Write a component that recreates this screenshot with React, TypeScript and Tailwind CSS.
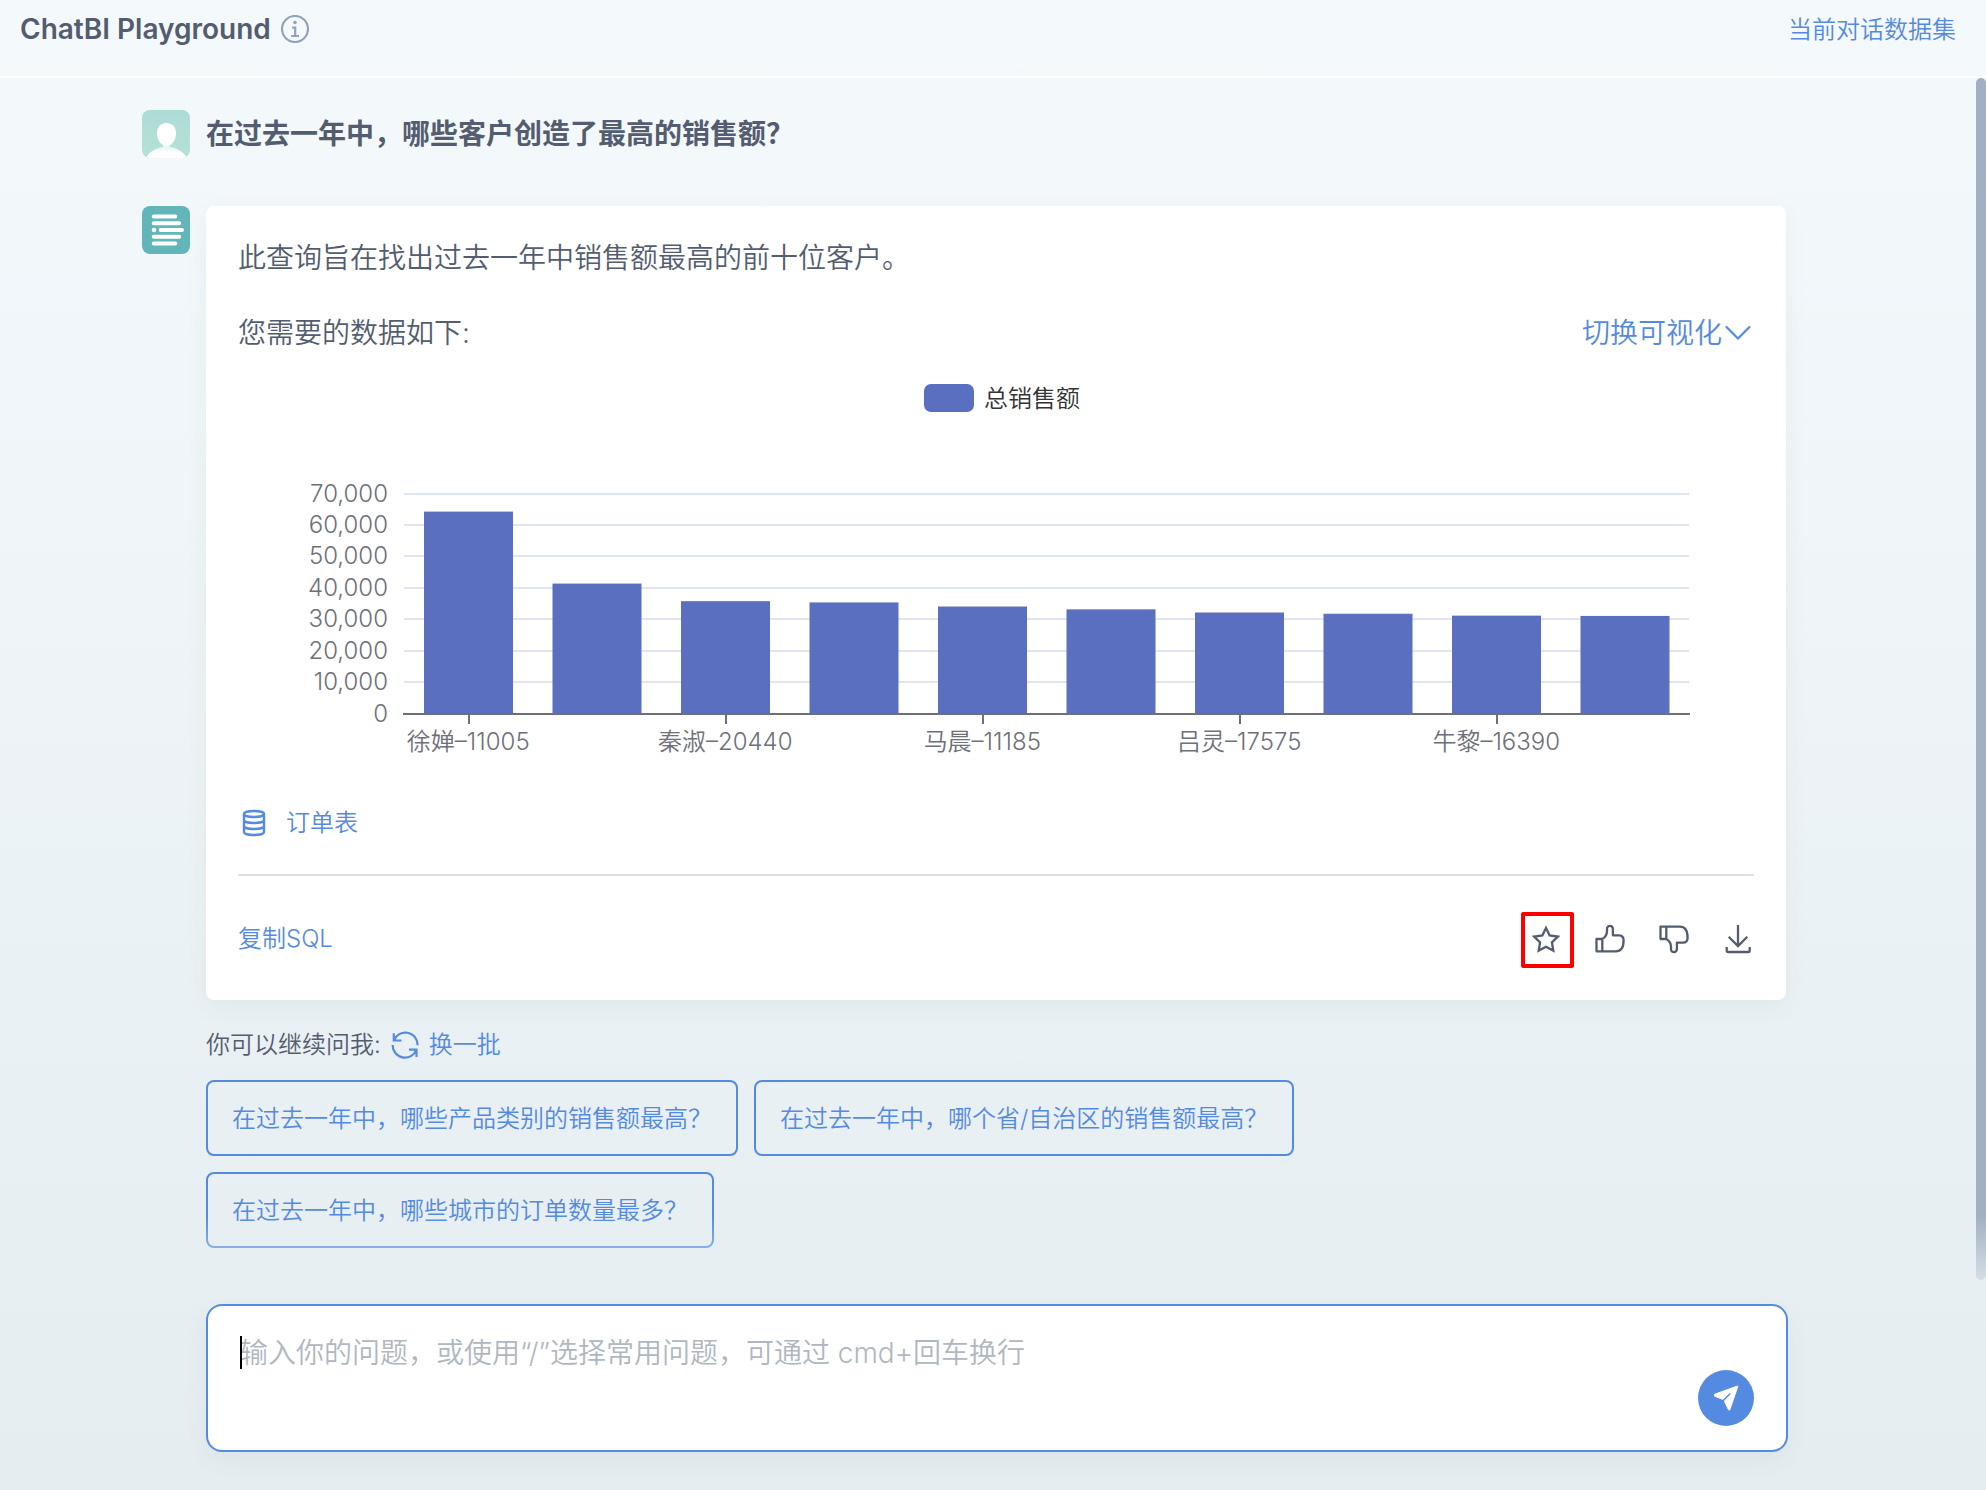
import React from "react";

const sales = [
  { name: "徐婵–11005", value: 64400 },
  { name: "", value: 41500 },
  { name: "秦淑–20440", value: 35900 },
  { name: "", value: 35500 },
  { name: "马晨–11185", value: 34200 },
  { name: "", value: 33300 },
  { name: "吕灵–17575", value: 32300 },
  { name: "", value: 31900 },
  { name: "牛黎–16390", value: 31300 },
  { name: "", value: 31200 },
];

const gridValues = [0, 10000, 20000, 30000, 40000, 50000, 60000, 70000];

const suggestions = [
  "在过去一年中，哪些产品类别的销售额最高？",
  "在过去一年中，哪个省/自治区的销售额最高？",
  "在过去一年中，哪些城市的订单数量最多？",
];

function InfoIcon() {
  return (
    <svg viewBox="0 0 28 28" className="size-7" fill="none" stroke="#8fa3ba" strokeWidth="2.200">
      <circle cx="14" cy="14" r="13" />
      <path d="M11.2 12.7H14.2V21M10.2 21H18" />
      <circle cx="14" cy="7.5" r="1.8" fill="#8fa3ba" stroke="none" />
    </svg>
  );
}

function UserAvatar() {
  return (
    <svg viewBox="0 0 48 48" className="size-12 rounded-lg">
      <defs>
        <linearGradient id="avatar-bg" x1="0" y1="0" x2="0" y2="1">
          <stop offset="0" stopColor="#addbd5" />
          <stop offset="1" stopColor="#b6e1da" />
        </linearGradient>
        <linearGradient id="avatar-body" x1="0" y1="0" x2="0" y2="1">
          <stop offset="0" stopColor="#d3edea" />
          <stop offset="0.7" stopColor="#ffffff" />
        </linearGradient>
      </defs>
      <rect width="48" height="48" fill="url(#avatar-bg)" />
      <path d="M4 48C8 41 14 38.5 21 37V32H28V37C35 38.5 41 41 45 48Z" fill="url(#avatar-body)" />
      <path d="M24.5 13C30 13 34 16.500 34 23C34 30 30 36 24.500 36C19 36 15 30 15 23C15 16.500 19 13 24.500 13Z" fill="#fff" />
    </svg>
  );
}

function BotAvatar() {
  return (
    <svg viewBox="0 0 48 48" className="size-12 rounded-lg bg-[#62b5b9]" stroke="#fff" strokeWidth="4" strokeLinecap="round">
      <path d="M11.700 10.500H33.300M11.700 17.200H37.200M18.700 24H40M11.700 30.800H37.200M11.700 37.600H33.300" />
      <circle cx="12" cy="24" r="2.300" fill="#fff" stroke="none" />
    </svg>
  );
}

function ChevronIcon() {
  return (
    <svg viewBox="0 0 28 28" className="h-7 w-8" fill="none" stroke="currentColor" strokeWidth="2.200" strokeLinecap="round" strokeLinejoin="round">
      <path d="M2.500 8L14 19.500L25.500 8" />
    </svg>
  );
}

function DatabaseIcon() {
  return (
    <svg viewBox="0 0 24 28" className="h-7 w-6" fill="none" stroke="currentColor" strokeWidth="2.400">
      <ellipse cx="12" cy="5" rx="10" ry="3" />
      <path d="M2 5V23A10 3 0 0 0 22 23V5M2 11A10 3 0 0 0 22 11M2 17A10 3 0 0 0 22 17" />
    </svg>
  );
}

function RefreshIcon() {
  return (
    <svg viewBox="0 0 28 28" className="size-7" fill="none" stroke="currentColor" strokeWidth="2.200">
      <path d="M2.800 2.300V9.500H10.500M2.800 9.500A12.300 12.300 0 0 1 26.600 14.200" />
      <path d="M25.500 26V18.700H18M25.500 18.700A12.300 12.300 0 0 1 1.700 14" />
    </svg>
  );
}

function StarIcon() {
  return (
    <svg viewBox="0 0 32 32" className="size-8" fill="none" stroke="currentColor" strokeWidth="2.300" strokeMiterlimit="8">
      <path d="M16 5L19.600 12.400L27.900 13.600L21.900 19.300L23.300 27.600L16 23.700L8.700 27.600L10.100 19.300L4.100 13.600L12.400 12.400Z" />
    </svg>
  );
}

function ThumbIcon({ down = false }: { down?: boolean }) {
  return (
    <svg viewBox="0 0 32 32" className={down ? "size-8 -scale-y-100" : "size-8"} fill="none" stroke="currentColor" strokeWidth="2.300" strokeLinejoin="round">
      <path d="M8.300 16V28.300H2.500V16H8.300C11 14.500 13 11 13 8V5.500C13 2 18.700 1.800 18.900 6V12.300H25C28 12.300 29.600 14 29.600 17.300C29.600 23.500 28 28.300 21.800 28.300H8.300" />
    </svg>
  );
}

function DownloadIcon() {
  return (
    <svg viewBox="0 0 32 32" className="size-8" fill="none" stroke="currentColor" strokeWidth="2.300">
      <path d="M16 2V23M6.700 13.700L16 23L25.300 13.700M4.700 24V27.500Q4.700 29 6.200 29H26.200Q27.700 29 27.700 27.500V24" />
    </svg>
  );
}

function SendIcon() {
  return (
    <svg viewBox="0 0 56 56" className="size-14">
      <path d="M39.500 16L16.500 24.300L16.300 26L25.800 29.800L30.500 39.800H31.800L39.800 16.500Z" fill="#fff" stroke="#fff" strokeWidth="1" strokeLinejoin="round" />
      <path d="M24.800 31L31.800 24" stroke="#548adf" strokeWidth="1.500" strokeLinecap="round" />
    </svg>
  );
}

function SalesChart() {
  const left = 166;
  const right = 1451;
  const base = 338;
  const height = 220;
  const step = (right - left) / sales.length;
  const y = (value: number) => base - (value / 70000) * height;
  return (
    <svg viewBox="0 0 1516 400" className="mt-[23px] block w-full" role="img" aria-label="总销售额">
      <rect x="686" y="8" width="50" height="28" rx="7" fill="#5b6fc0" />
      <text x="746" y="31" fontSize="24" fill="#333333">总销售额</text>
      {gridValues.map((value) => (
        <g key={value}>
          {value > 0 && <rect x={left} y={Math.floor(y(value)) - 1} width={right - left} height="2" fill="#e0e6f1" />}
          <text x="150" y={Math.floor(y(value)) + 8} fontSize="24" textAnchor="end" fill="#6e7079">
            {value.toLocaleString("en-US")}
          </text>
        </g>
      ))}
      {sales.map((item, i) => (
        <rect key={i} x={left + step * i + 20} y={y(item.value)} width="89" height={base - y(item.value)} fill="#5b6fc0" />
      ))}
      <rect x={left - 1} y={base - 1} width={right - left + 2} height="2" fill="#6e7079" />
      {sales.map((item, i) =>
        item.name ? (
          <g key={item.name}>
            <rect x={Math.round(left + step * (i + 0.5))} y={base} width="2" height="10" fill="#6e7079" />
            <text x={left + step * (i + 0.5)} y="374" fontSize="24" textAnchor="middle" fill="#6e7079">
              {item.name}
            </text>
          </g>
        ) : null
      )}
    </svg>
  );
}

export default function App() {
  return (
    <div className="relative flex min-h-screen flex-col bg-linear-to-b from-[#f4f9fc] to-[#e5edf0] font-['Inter','Noto_Sans_CJK_SC',sans-serif] font-[350] text-[#535d6f]">
      <header className="flex h-[78px] items-start justify-between border-b-2 border-white pt-2 pr-[30px] pl-5">
        <div className="flex items-center gap-2.5">
          <h1 className="text-[28px] leading-[42px] font-semibold">ChatBI Playground</h1>
          <button type="button" aria-label="说明">
            <InfoIcon />
          </button>
        </div>
        <a href="#dataset" className="text-2xl leading-[44px] text-[#548adf]">当前对话数据集</a>
      </header>

      <div className="absolute top-[78px] right-0 h-[1202px] w-2.5 rounded-full bg-[#a2b0c1]" />

      <main className="flex flex-col px-[142px] pt-8">
        <section className="flex gap-4">
          <UserAvatar />
          <h2 className="text-[28px] leading-[48px] font-bold">在过去一年中，哪些客户创造了最高的销售额？</h2>
        </section>

        <section className="mt-12 flex gap-4 pr-[58px]">
          <div className="shrink-0">
            <BotAvatar />
          </div>
          <div className="min-w-0 flex-1">
            <article className="rounded-lg bg-white px-8 pt-8 pb-[41px] shadow-[0_8px_24px_rgba(40,80,100,0.05)]">
              <p className="text-[28px] leading-10">此查询旨在找出过去一年中销售额最高的前十位客户。</p>
              <div className="mt-[35px] flex items-center justify-between text-[28px] leading-10">
                <p>您需要的数据如下:</p>
                <button type="button" className="flex items-center text-[#548adf]">
                  切换可视化
                  <ChevronIcon />
                </button>
              </div>

              <SalesChart />

              <a href="#orders" className="mt-[27px] flex h-10 w-fit items-center gap-5 pl-1 text-2xl text-[#548adf]">
                <DatabaseIcon />
                订单表
              </a>

              <div className="mt-[31px] flex items-center justify-between border-t-2 border-[#dae0e6] pt-[43px]">
                <button type="button" className="text-2xl leading-10 text-[#548adf]">复制SQL</button>
                <div className="flex items-center gap-8">
                  <button type="button" aria-label="收藏" className="relative">
                    <StarIcon />
                    <span className="absolute -top-[11px] -right-3 -bottom-[13px] -left-[9px] rounded-xs border-4 border-[#ff0000]" />
                  </button>
                  <button type="button" aria-label="赞">
                    <ThumbIcon />
                  </button>
                  <button type="button" aria-label="踩">
                    <ThumbIcon down />
                  </button>
                  <button type="button" aria-label="下载">
                    <DownloadIcon />
                  </button>
                </div>
              </div>
            </article>

            <div className="mt-[27px] flex items-center text-2xl leading-9">
              <span>你可以继续问我:</span>
              <button type="button" className="ml-2.5 flex items-center gap-2.5 text-[#548adf]">
                <RefreshIcon />
                换一批
              </button>
            </div>

            <div className="mt-[17px] flex flex-wrap gap-4">
              {suggestions.map((text) => (
                <button key={text} type="button" className="h-[76px] rounded-lg border-2 border-[#548adf] px-6 pt-0.5 text-2xl text-[#548adf]">
                  {text}
                </button>
              ))}
            </div>
          </div>
        </section>
      </main>

      <div className="relative z-10 -mt-8 h-[88px] bg-linear-to-b from-[#e8eff2]/0 to-[#e8eff2]" />

      <form className="relative z-10 mr-[198px] mb-[38px] ml-[206px] flex h-[148px] rounded-2xl border-2 border-[#548adf] bg-white pt-[29px] pr-8 pl-8 shadow-[0_8px_24px_rgba(40,80,100,0.06)]">
        <span className="absolute top-[30px] left-8 h-[33px] w-0.5 bg-black" />
        <textarea
          aria-label="输入你的问题"
          placeholder="输入你的问题，或使用“/”选择常用问题，可通过 cmd+回车换行"
          className="h-full flex-1 resize-none text-[28px] leading-9 outline-none placeholder:text-[#b0b7c0]"
        />
        <button type="button" aria-label="发送" className="mb-6 self-end rounded-full bg-[#548adf]">
          <SendIcon />
        </button>
      </form>
    </div>
  );
}
